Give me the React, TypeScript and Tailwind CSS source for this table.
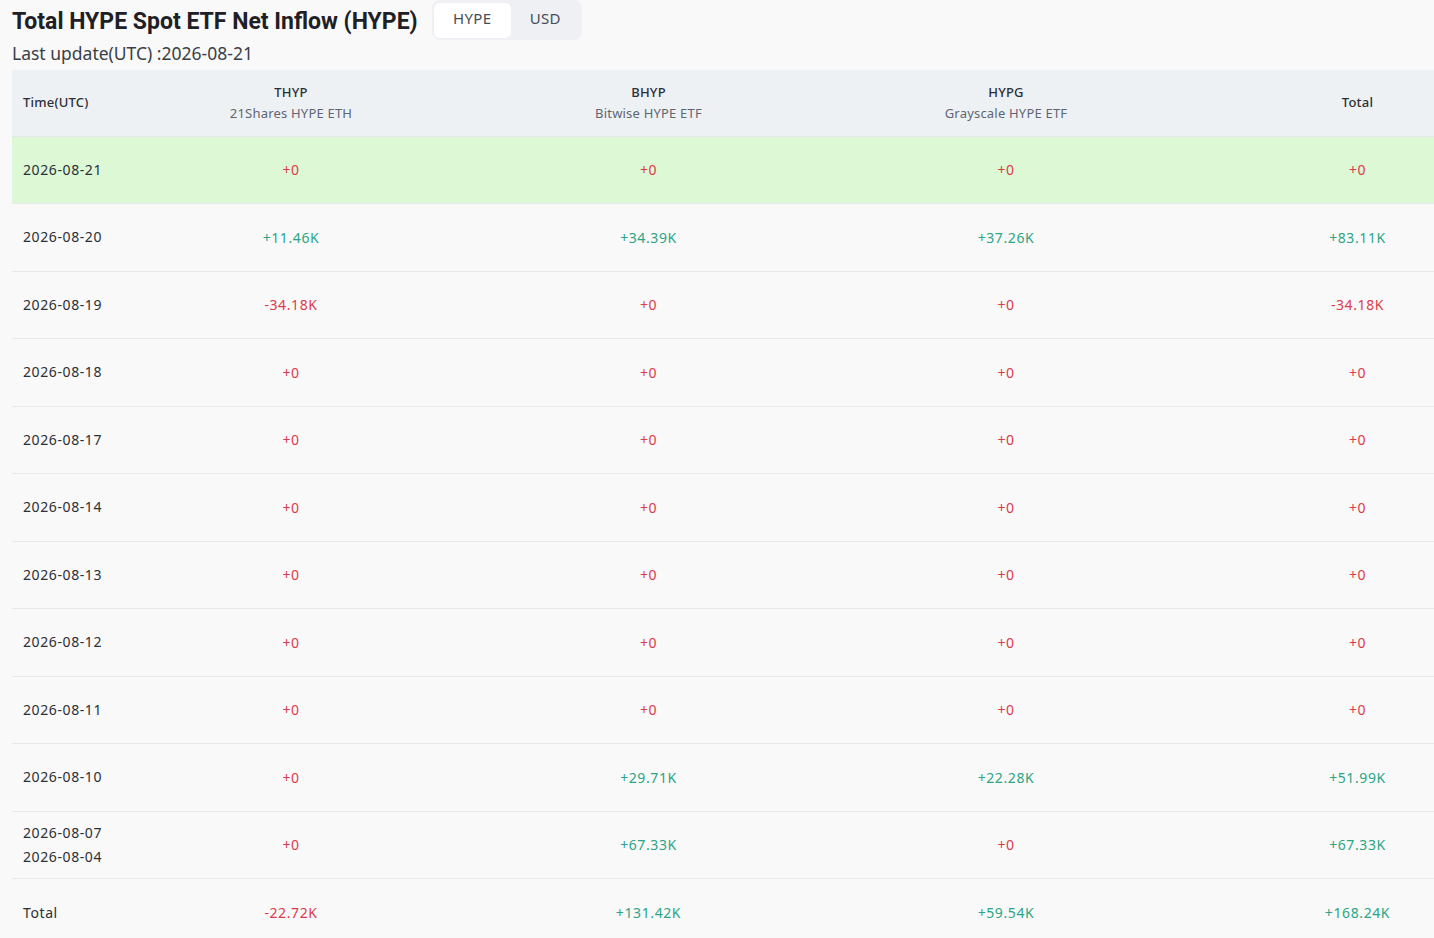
import React from "react";

type Row = { date: string[]; thyp: string; bhyp: string; hypg: string; total: string; today?: boolean };

const rows: Row[] = [
  { date: ["2026-08-21"], thyp: "+0", bhyp: "+0", hypg: "+0", total: "+0", today: true },
  { date: ["2026-08-20"], thyp: "+11.46K", bhyp: "+34.39K", hypg: "+37.26K", total: "+83.11K" },
  { date: ["2026-08-19"], thyp: "-34.18K", bhyp: "+0", hypg: "+0", total: "-34.18K" },
  { date: ["2026-08-18"], thyp: "+0", bhyp: "+0", hypg: "+0", total: "+0" },
  { date: ["2026-08-17"], thyp: "+0", bhyp: "+0", hypg: "+0", total: "+0" },
  { date: ["2026-08-14"], thyp: "+0", bhyp: "+0", hypg: "+0", total: "+0" },
  { date: ["2026-08-13"], thyp: "+0", bhyp: "+0", hypg: "+0", total: "+0" },
  { date: ["2026-08-12"], thyp: "+0", bhyp: "+0", hypg: "+0", total: "+0" },
  { date: ["2026-08-11"], thyp: "+0", bhyp: "+0", hypg: "+0", total: "+0" },
  { date: ["2026-08-10"], thyp: "+0", bhyp: "+29.71K", hypg: "+22.28K", total: "+51.99K" },
  { date: ["2026-08-07", "2026-08-04"], thyp: "+0", bhyp: "+67.33K", hypg: "+0", total: "+67.33K" },
];

// zero and outflows are red, real inflows green
const tone = (v: string) =>
  v.startsWith("-") || v === "+0" ? "text-[#dc3b4c]" : "text-[#2ba585]";

const Val = ({ v }: { v: string }) => <td className={`text-center ${tone(v)}`}>{v}</td>;

const App = () => {
  return (
    <div className="w-[1434px] h-[938px] overflow-hidden bg-[#f9f9f9] pl-3 text-[#2b2f36] font-['Noto_Sans',sans-serif]">
      <div className="flex items-start h-10 gap-[14px]">
        <h1 className="mt-[6px] text-[23px] leading-8 font-bold text-[#1e2026] font-['Roboto',sans-serif]">
          Total HYPE Spot ETF Net Inflow (HYPE)
        </h1>
        <div className="flex h-10 items-center rounded-lg bg-[#eef0f3] p-[2px] text-[15px] tracking-[0.3px] text-[#474d57]">
          <button className="h-[35px] w-[77px] rounded-md bg-white pb-[4px]">HYPE</button>
          <button className="h-[35px] w-[69px] pb-[4px]">USD</button>
        </div>
      </div>
      <p className="mt-[1px] text-[17.5px] leading-6 text-[#3a3f47]">Last update(UTC) :2026-08-21</p>

      <table className="mt-[5px] w-[1518px] table-fixed border-collapse text-[14px] tracking-[0.6px]">
        <colgroup>
          <col className="w-[100px]" />
          <col className="w-[358px]" />
          <col className="w-[357px]" />
          <col className="w-[358px]" />
          <col className="w-[345px]" />
        </colgroup>
        <thead>
          <tr className="h-[66px] bg-[#eef1f4] text-[13px] tracking-[0.2px] border-b border-[#e3e6ea]">
            <th className="pl-[11px] text-left font-medium">Time(UTC)</th>
            {[
              ["THYP", "21Shares HYPE ETH"],
              ["BHYP", "Bitwise HYPE ETF"],
              ["HYPG", "Grayscale HYPE ETF"],
            ].map(([t, s]) => (
              <th key={t} className="text-center font-medium">
                <div className="leading-[21px]">{t}</div>
                <div className="leading-[21px] font-normal text-[#5e6673]">{s}</div>
              </th>
            ))}
            <th className="text-center font-medium">Total</th>
          </tr>
        </thead>
        <tbody>
          {rows.map((r) => (
            <tr
              key={r.date[0]}
              className={`h-[67.5px] border-b border-[#e6e8ea] ${r.today ? "bg-[#dcf8d5]" : ""}`}
            >
              <td className="pl-[11px] leading-6 text-[#2b2f36]">
                {r.date.map((d) => (
                  <div key={d}>{d}</div>
                ))}
              </td>
              <Val v={r.thyp} />
              <Val v={r.bhyp} />
              <Val v={r.hypg} />
              <Val v={r.total} />
            </tr>
          ))}
          <tr className="h-[67.5px]">
            <td className="pl-[11px]">Total</td>
            <Val v="-22.72K" />
            <Val v="+131.42K" />
            <Val v="+59.54K" />
            <Val v="+168.24K" />
          </tr>
        </tbody>
      </table>
    </div>
  );
};

export default App;
